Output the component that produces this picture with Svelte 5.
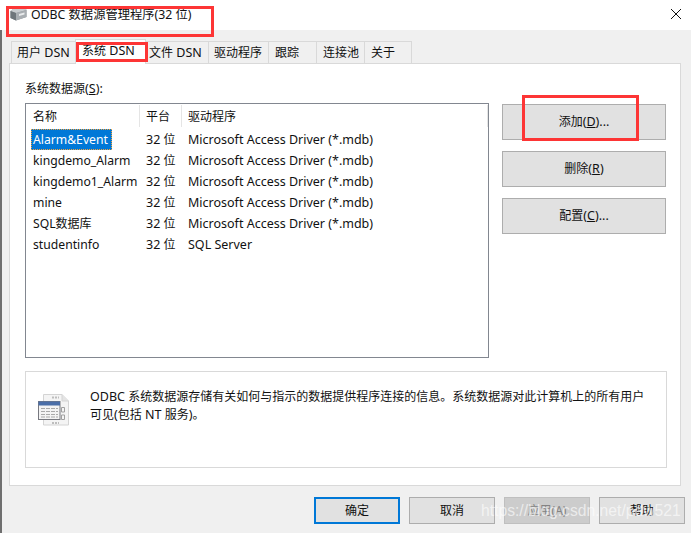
<script>
  const tabs = [
    { label: '用户 DSN', width: 65, pad: 5 },
    { label: '系统 DSN', width: 71, pad: 6, active: true },
    { label: '文件 DSN', width: 64, pad: 3 },
    { label: '驱动程序', width: 61, pad: 5 },
    { label: '跟踪', width: 49, pad: 6 },
    { label: '连接池', width: 49, pad: 6 },
    { label: '关于', width: 48, pad: 6 }
  ];

  const sources = [
    { name: 'Alarm&Event', bits: '32 位', driver: 'Microsoft Access Driver (*.mdb)' },
    { name: 'kingdemo_Alarm', bits: '32 位', driver: 'Microsoft Access Driver (*.mdb)' },
    { name: 'kingdemo1_Alarm', bits: '32 位', driver: 'Microsoft Access Driver (*.mdb)' },
    { name: 'mine', bits: '32 位', driver: 'Microsoft Access Driver (*.mdb)' },
    { name: 'SQL数据库', bits: '32 位', driver: 'Microsoft Access Driver (*.mdb)' },
    { name: 'studentinfo', bits: '32 位', driver: 'SQL Server' }
  ];

  // chinese runs are set a little smaller than the latin ones
  const runs = (text) => text.split(/([\u3000-\u9fff\uff00-\uffef]+)/);
</script>

{#snippet mixed(text)}{#each runs(text) as part, i}{#if i % 2}<span class="zh">{part}</span>{:else}{part}{/if}{/each}{/snippet}

<div class="dialog">
  <header class="titlebar">
    <svg class="app-icon" width="17" height="14" viewBox="0 0 17 14">
      <path d="M0.5 4 L5 0.5 L15 0.5 L16.5 3 L16.5 10 L6 13.5 L0.5 11 Z" fill="#8f959a" />
      <path d="M0.5 4 L6 6 L16.5 3 L15 0.5 L5 0.5 Z" fill="#c9cdd0" />
      <path d="M6 6 L6 13.5 L16.5 10 L16.5 3 Z" fill="#a9aeb2" />
      <path d="M9 7 L14.5 5.4 L14.5 7.4 L9 9 Z" fill="#e9ebec" />
      <path d="M0.5 4 L6 6 L6 13.5 L0.5 11 Z" fill="#6f767b" />
    </svg>
    <span class="title">ODBC 数据源管理程序(32 位)</span>
    <svg class="close" width="10" height="10" viewBox="0 0 10 10">
      <path d="M0 0 L10 10 M10 0 L0 10" stroke="#111" stroke-width="1" fill="none" />
    </svg>
  </header>

  <div class="body">
    <nav class="tabs">
      {#each tabs as tab}
        <div class="tab" class:active={tab.active} style="width: {tab.width}px; padding-left: {tab.pad}px">{@render mixed(tab.label)}</div>
      {/each}
    </nav>

    <section class="panel">
      <div class="top">
        <div class="left">
          <div class="label"><span class="zh">系统数据源</span>(<u>S</u>):</div>
          <div class="list">
            <div class="row head">
              <span class="c-name zh">名称</span>
              <span class="c-bits zh">平台</span>
              <span class="c-driver zh">驱动程序</span>
            </div>
            {#each sources as s, i}
              <div class="row">
                <span class="c-name"><span class="name" class:selected={i === 0}>{@render mixed(s.name)}</span></span>
                <span class="c-bits">{@render mixed(s.bits)}</span>
                <span class="c-driver">{s.driver}</span>
              </div>
            {/each}
          </div>
        </div>
        <div class="actions">
          <button><span class="zh">添加</span>(<u>D</u>)...</button>
          <button><span class="zh">删除</span>(<u>R</u>)</button>
          <button><span class="zh">配置</span>(<u>C</u>)...</button>
        </div>
      </div>

      <div class="info">
        <svg class="info-icon" width="31" height="32" viewBox="0 0 31 32">
          <path d="M5.5 0.5 H24 L30.5 7 V31 H5.5 Z" fill="#f4f4f4" stroke="#d4d4d4" />
          <path d="M24 0.5 V7 H30.5" fill="#e4e4e4" stroke="#d4d4d4" />
          <path d="M14 3.5 H21 M14 29 H21" stroke="#bdbdbd" stroke-width="2" stroke-dasharray="2 1" />
          <rect x="0.5" y="7.5" width="21.5" height="18" fill="#f3f3f3" stroke="#77787f" />
          <rect x="0.5" y="7.5" width="21.5" height="4" fill="#4a6ea8" />
          <path d="M3 14.5 H20 M3 17.5 H20 M3 20.5 H20 M3 23 H20" stroke="#a9a9a9" stroke-dasharray="4 1" />
          <path d="M23.5 13.5 h3 v4.5 h-3 Z M23.5 21 h3 v4.5 h-3 Z" fill="none" stroke="#a0a0a0" />
        </svg>
        <p>{@render mixed('ODBC 系统数据源存储有关如何与指示的数据提供程序连接的信息。系统数据源对此计算机上的所有用户可见(包括 NT 服务)。')}</p>
      </div>
    </section>

    <footer class="footer">
      <button class="primary zh">确定</button>
      <button class="zh">取消</button>
      <button class="disabled"><span class="zh">应用</span>(A)</button>
      <button class="zh">帮助</button>
    </footer>
  </div>

  <!-- red annotations and the watermark drawn over the screenshot -->
  <div class="mark mark-title"></div>
  <div class="mark mark-tab"></div>
  <div class="mark mark-add"></div>
  <div class="watermark">https://blog.csdn.net/pdw521</div>
</div>

<style>
  :global(body) {
    margin: 0;
    background: #f0f0f0;
  }

  .dialog {
    position: relative;
    width: 691px;
    height: 533px;
    overflow: hidden;
    font-family: "Noto Sans", "Noto Sans CJK SC", sans-serif;
    font-size: 12.5px;
    color: #111;
  }

  .zh {
    font-size: 12px;
  }

  .titlebar {
    display: flex;
    align-items: center;
    height: 30px;
    background: #fff;
    padding: 0 10px 2px 10px;
    box-sizing: border-box;
  }

  .app-icon {
    margin-right: 4px;
  }

  .title {
    flex: 1;
    font-size: 12.3px;
  }

  .body {
    height: 503px;
    box-sizing: border-box;
    padding: 9px 0 0 7px;
    background: #f0f0f0;
    border-left: 2px solid #6f6f6f;
  }

  .tabs {
    display: flex;
    align-items: flex-end;
    height: 24px;
    padding-left: 3px;
  }

  .tab {
    box-sizing: border-box;
    height: 22px;
    line-height: 22px;
    white-space: nowrap;
    background: #f0f0f0;
    border: 1px solid #d9d9d9;
    border-bottom: none;
    margin-left: -1px;
  }

  .tab.active {
    height: 25px;
    background: #fff;
    line-height: 22px;
    position: relative;
    margin-bottom: -1px;
  }

  .panel {
    box-sizing: border-box;
    width: 672px;
    height: 423px;
    background: #fff;
    border: 1px solid #d9d9d9;
    padding: 16px 14px 0 15px;
  }

  .top {
    display: flex;
    justify-content: space-between;
  }

  .label {
    height: 23px;
    line-height: 18px;
  }

  .list {
    box-sizing: border-box;
    width: 464px;
    height: 255px;
    border: 1px solid #828790;
    padding-top: 1px;
  }

  .row {
    display: flex;
    height: 21px;
    line-height: 21px;
    white-space: nowrap;
  }

  .row.head {
    height: 24px;
    line-height: 24px;
  }

  .row.head span {
    border-right: 1px solid #e5e5e5;
    height: 22px;
  }

  .c-name {
    box-sizing: border-box;
    width: 114px;
    padding-left: 7px;
  }

  .c-bits {
    box-sizing: border-box;
    width: 42px;
    padding-left: 6px;
  }

  .c-driver {
    box-sizing: border-box;
    flex: 1;
    padding-left: 6px;
  }

  .name {
    font-size: 12.2px;
  }

  .name.selected {
    display: inline-block;
    margin-left: -2px;
    padding: 0 4px 0 2px;
    background: #0078d7;
    color: #fff;
    outline: 1px dotted #f3a23b;
    outline-offset: -1px;
  }

  .actions {
    display: flex;
    flex-direction: column;
    gap: 11px;
    padding-top: 24px;
  }

  button {
    box-sizing: border-box;
    width: 164px;
    height: 36px;
    padding: 0 0 2px;
    font-family: inherit;
    font-size: 12.5px;
    color: #111;
    background: #e1e1e1;
    border: 1px solid #adadad;
  }

  .info {
    box-sizing: border-box;
    display: flex;
    width: 642px;
    height: 97px;
    margin-top: 13px;
    border: 1px solid #d9d9d9;
    padding: 16px 14px 0 12px;
  }

  .info-icon {
    flex: none;
    margin: 6px 21px 0 0;
  }

  .info p {
    margin: 0;
    line-height: 18px;
  }

  .footer {
    display: flex;
    gap: 9px;
    padding: 11px 0 0 305px;
  }

  .footer button {
    width: 86px;
    height: 27px;
    font-size: 12px;
  }

  .footer button.primary {
    border: 2px solid #0078d7;
  }

  .footer button.disabled {
    background: #cccccc;
    border-color: #bfbfbf;
    color: #838383;
  }

  .mark {
    position: absolute;
    box-sizing: border-box;
    border: 3px solid #fd3535;
    pointer-events: none;
  }

  .mark-title {
    left: 6px;
    top: 6px;
    width: 208px;
    height: 31px;
  }

  .mark-tab {
    left: 76px;
    top: 42px;
    width: 72px;
    height: 20px;
  }

  .mark-add {
    left: 522px;
    top: 95px;
    width: 117px;
    height: 46px;
  }

  .watermark {
    position: absolute;
    left: 481px;
    top: 502px;
    font-family: "Liberation Sans", sans-serif;
    font-size: 15.7px;
    color: rgba(255, 255, 255, 0.62);
    white-space: nowrap;
  }
</style>
